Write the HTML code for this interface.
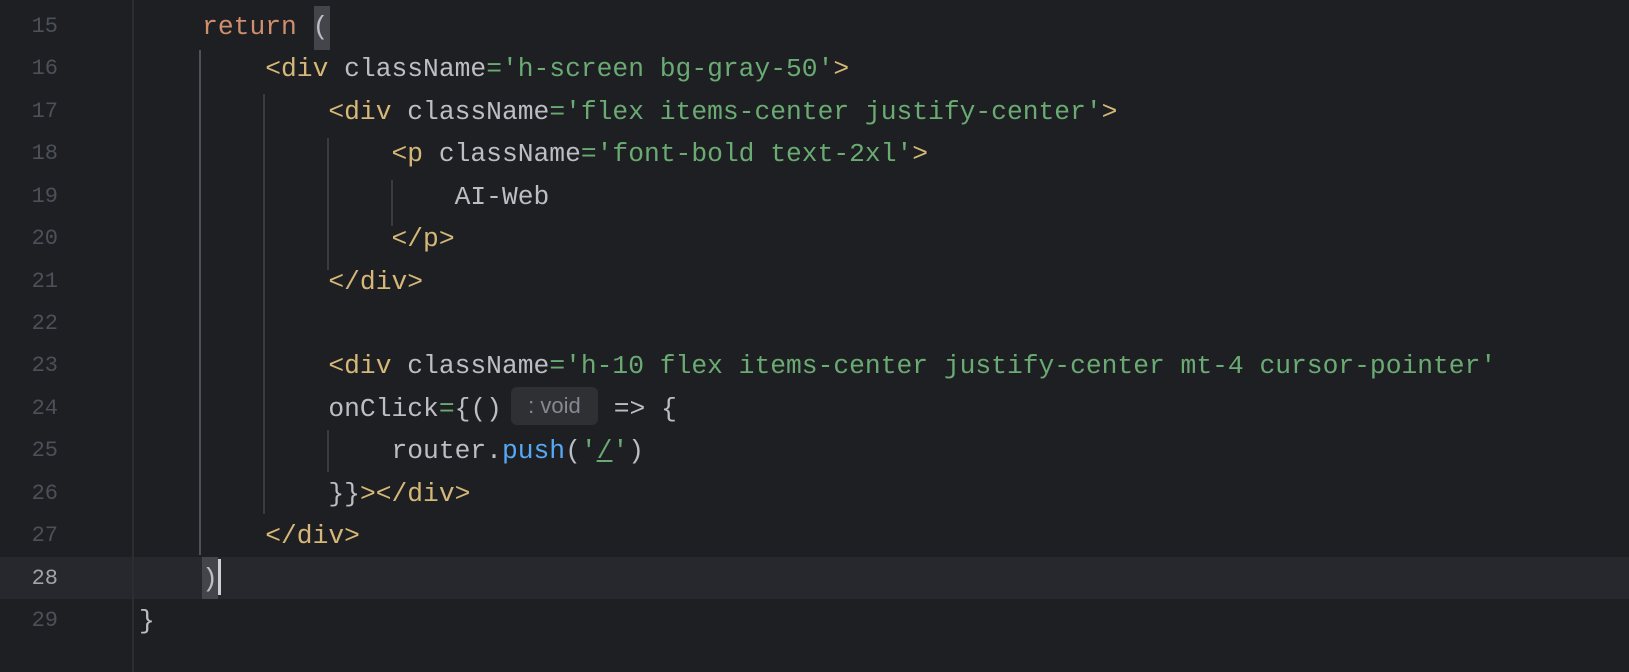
<!DOCTYPE html>
<html><head><meta charset="utf-8"><style>
body{margin:0;width:1629px;height:672px;background:#1e1f22;overflow:hidden;position:relative;font-family:"Liberation Mono",monospace;}
.ln{position:absolute;left:0;width:58px;text-align:right;font-size:22px;color:#4b5059;height:42.43px;line-height:42.43px;}
.c{position:absolute;left:139px;font-size:26.3px;color:#bcbec4;height:42.43px;line-height:42.43px;white-space:pre;}
.k{color:#cf8e6d}.t{color:#d5b778}.s{color:#6aab73}.m{color:#56a8f5}
.g{position:absolute;width:2px;background:#393b40}
.hint{display:inline-block;box-sizing:border-box;width:87px;text-align:center;background:#2e3034;color:#868991;font-family:"Liberation Sans",sans-serif;font-size:22px;line-height:38px;height:38px;border-radius:6px;margin:0 0 0 9px;vertical-align:middle;position:relative;top:-3px}
</style></head><body>
<div style="position:absolute;left:0;top:557px;width:1629px;height:42px;background:#26282e"></div>
<div style="position:absolute;left:132px;top:0;width:2px;height:672px;background:#2b2d30"></div>
<div class="g" style="left:199px;top:50px;height:505px;background:#4e5157"></div>
<div class="g" style="left:263px;top:94px;height:420px"></div>
<div class="g" style="left:327px;top:138px;height:132px"></div>
<div class="g" style="left:327px;top:430px;height:42px"></div>
<div class="g" style="left:391px;top:180px;height:46px"></div>
<div style="position:absolute;left:314px;top:6px;width:16px;height:44px;background:#43454a"></div>
<div style="position:absolute;left:202px;top:557px;width:16px;height:42px;background:#43454a"></div>
<div style="position:absolute;left:218px;top:559px;width:3px;height:36px;background:#ced0d6"></div>

<div class="ln" style="top:6px">15</div>
<div class="ln" style="top:48.4px">16</div>
<div class="ln" style="top:90.9px">17</div>
<div class="ln" style="top:133.3px">18</div>
<div class="ln" style="top:175.7px">19</div>
<div class="ln" style="top:218.2px">20</div>
<div class="ln" style="top:260.6px">21</div>
<div class="ln" style="top:303px">22</div>
<div class="ln" style="top:345.4px">23</div>
<div class="ln" style="top:387.9px">24</div>
<div class="ln" style="top:430.3px">25</div>
<div class="ln" style="top:472.7px">26</div>
<div class="ln" style="top:515.2px">27</div>
<div class="ln" style="top:557.6px;color:#a1a3ab">28</div>
<div class="ln" style="top:600px">29</div>

<div class="c" style="top:6px">    <span class="k">return</span> (</div>
<div class="c" style="top:48.4px">        <span class="t">&lt;div</span> className<span class="s">='h-screen bg-gray-50'</span><span class="t">&gt;</span></div>
<div class="c" style="top:90.9px">            <span class="t">&lt;div</span> className<span class="s">='flex items-center justify-center'</span><span class="t">&gt;</span></div>
<div class="c" style="top:133.3px">                <span class="t">&lt;p</span> className<span class="s">='font-bold text-2xl'</span><span class="t">&gt;</span></div>
<div class="c" style="top:175.7px">                    AI-Web</div>
<div class="c" style="top:218.2px">                <span class="t">&lt;/p&gt;</span></div>
<div class="c" style="top:260.6px">            <span class="t">&lt;/div&gt;</span></div>
<div class="c" style="top:345.4px">            <span class="t">&lt;div</span> className<span class="s">='h-10 flex items-center justify-center mt-4 cursor-pointer'</span></div>
<div class="c" style="top:387.9px">            onClick<span class="s">=</span>{()<span class="hint">: void</span> =&gt; {</div>
<div class="c" style="top:430.3px">                router.<span class="m">push</span>(<span class="s">'<u>/</u>'</span>)</div>
<div class="c" style="top:472.7px">            }}<span class="t">&gt;&lt;/div&gt;</span></div>
<div class="c" style="top:515.2px">        <span class="t">&lt;/div&gt;</span></div>
<div class="c" style="top:557.6px">    )</div>
<div class="c" style="top:600px">}</div>
</body></html>
